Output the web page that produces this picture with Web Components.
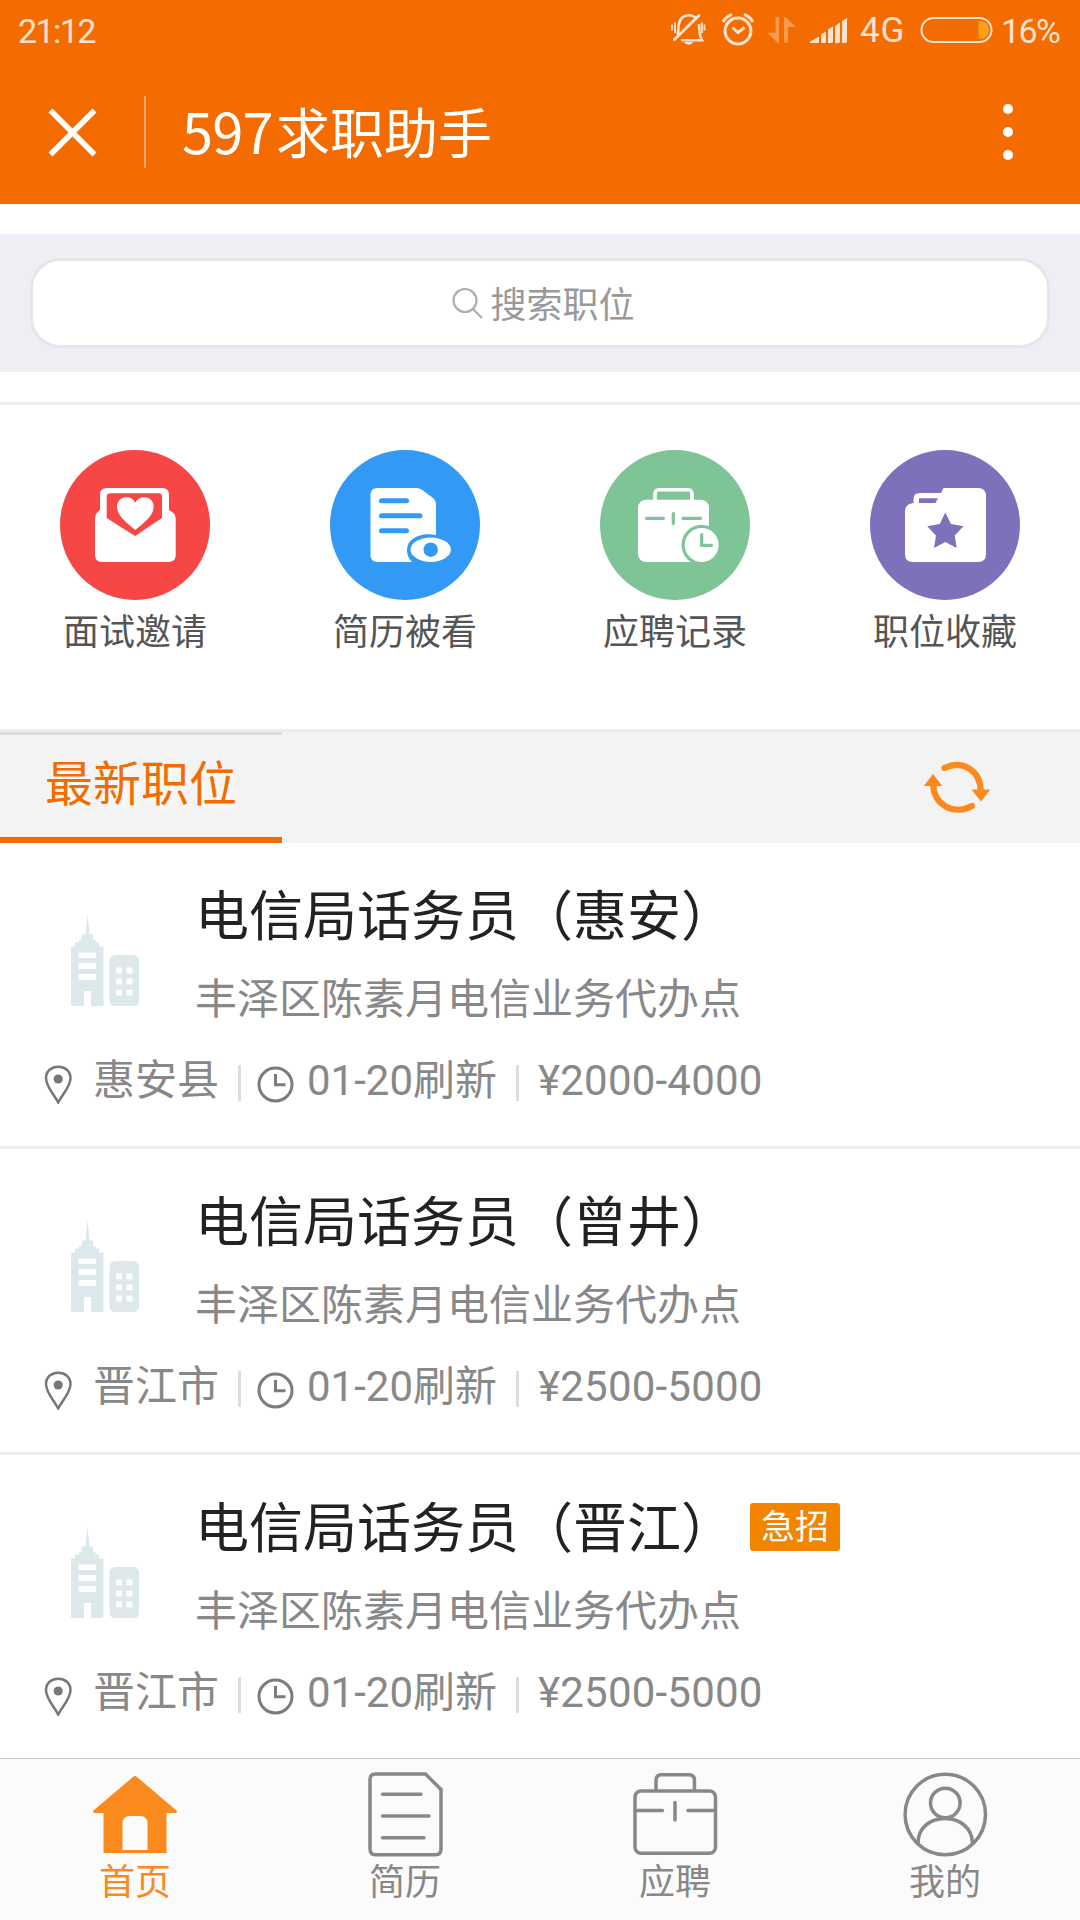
<!DOCTYPE html>
<html lang="zh-CN">
<head>
<meta charset="utf-8">
<title>597求职助手</title>
<style>
html,body{margin:0;padding:0;background:#fff}
body{width:1080px;height:1920px;overflow:hidden;font-family:Roboto,"Noto Sans CJK SC",sans-serif}
</style>
</head>
<body>
<app-screen></app-screen>
<script>
const define = (name, render) => customElements.define(name, class extends HTMLElement {
  connectedCallback() {
    if (this.shadowRoot) return;
    this.attachShadow({ mode: 'open' }).innerHTML =
      '<style>*{box-sizing:border-box}svg{display:block;flex:none}</style>' + render(this);
  }
});

define('status-bar', () => `
<style>
:host{display:flex;align-items:flex-start;height:60px;padding:0 19px 0 18px;color:#fde2cd;font-size:34px;line-height:62px;letter-spacing:-1.6px}
.time{margin-right:auto}
.alarm{margin-left:16px}.data{margin-left:14px}.sig{margin-left:14px}
.net{margin-left:12px;width:46px;font-size:35px;letter-spacing:.8px}.bat{margin-left:14px}
.pct{margin-left:8px;width:60px}
</style>
<span class="time">21:12</span>
<svg width="36" height="60" viewBox="670 0 36 60" fill="none" stroke="#fde2cd" stroke-width="2.6">
 <path d="M677.5 35C679 31 678 28 678.6 25C680 18 684 15.3 688.5 15.3C692 15.3 694.5 16.5 696.5 19M699 24C699.3 30 699 35 702 40.3H681"/>
 <path d="M674.5 39.5L699 15.5" stroke-width="3" stroke-linecap="round"/>
 <path d="M672 24.5V30.5M675 22.5V33M702 22.5V33M704.5 24.5V30.5" stroke-width="1.8"/>
 <path d="M683.5 42H693.5Q689 47.5 683.5 42Z" fill="#fde2cd" stroke="none"/>
</svg>
<svg class="alarm" width="32" height="60" viewBox="722 0 32 60" fill="none" stroke="#fde2cd" stroke-width="3">
 <circle cx="738" cy="31" r="12.9"/><path d="M732.5 27.5L738 32.5L744.5 27.5" stroke-width="3"/>
 <path d="M723 22Q726 16.500 732 14.500M753 22Q750 16.500 744 14.500" stroke-width="3.2"/>
</svg>
<svg class="data" width="28" height="60" viewBox="769 0 28 60" fill="#f89a50">
 <path d="M776.500 17.500Q778 16 780 17.500V43H778.500L769 33.500V32.800H776.500ZM785 17H786.500L796 26.300V27H789V42Q787 44 785 42Z"/>
</svg>
<svg class="sig" width="38" height="60" viewBox="811 0 38 60" fill="#fde2cd">
 <path d="M811 43V41.800L820 36.500V42L819 43ZM822 34.500L827 31.500V42L826 43H822ZM829 29.500L834 26.500V42L833 43H829ZM836 26L841 22.500V42L840 43H836ZM843 21L848 18V42L847 43H843Z"/>
</svg>
<span class="net">4G</span>
<svg class="bat" width="73" height="60" viewBox="920.500 0 73 60">
 <rect x="922" y="18" width="70" height="24" rx="12" fill="none" stroke="#fde2cd" stroke-width="2"/>
 <path d="M979 21Q989.500 21 989.500 30T979 39Z" fill="#ff9f1a"/>
</svg>
<span class="pct">16%</span>`);

define('title-bar', () => `
<style>
:host{display:flex;align-items:center;height:144px;color:#fff;padding-left:48px}
i{width:2px;height:72px;background:#f8a566;margin:0 36px 0 47px}
h1{margin:6px 0 0;font-size:54px;font-weight:400;line-height:72px;flex:1;display:flex;align-items:baseline}
::slotted([slot=num]){width:94px;font-family:"Noto Sans CJK SC",sans-serif;font-size:56px;line-height:64px;letter-spacing:-.8px}
.more{margin-right:65px}
</style>
<svg width="49" height="49" viewBox="0 0 49 49" stroke="#fff" stroke-width="5.600"><path d="M2.500 2.500L46.500 46.500M46.500 2.500L2.500 46.500"/></svg>
<i></i><h1><slot name="num"></slot><slot></slot></h1>
<svg class="more" width="14" height="60" viewBox="0 0 14 60" fill="#fff"><circle cx="7" cy="7" r="5"/><circle cx="7" cy="30" r="5"/><circle cx="7" cy="53" r="5"/></svg>`);

define('search-box', () => `
<style>
:host{display:block;margin:30px 0;padding:24px 30px;height:138px;background:#efeef4}
div{height:90px;border:3px solid #e5e5ea;border-radius:30px;background:#fff;display:flex;align-items:center;justify-content:center;color:#999;font-size:36px;line-height:60px;padding-left:4px}
svg{margin:0 7px 0 3px}
span{margin-top:5px}
</style>
<div><svg width="31" height="32" viewBox="0 0 31 32" fill="none" stroke="#adadad" stroke-width="2.200"><circle cx="13" cy="13.500" r="11.500"/><path d="M21 22L30 31"/></svg><span><slot></slot></span></div>`);

const quickIcons = {
  invite: `<circle cx="75" cy="75" r="75" fill="#f64646"/>
   <path fill="#fff" d="M40 60V45Q40 38 47 38H102Q109 38 109 45V60Q115.700 63 115.700 69V105Q115.700 112 108.700 112H42Q35 112 35 105V69Q35 63 40 60Z"/>
   <path d="M46.700 68V47Q46.700 43.300 50.500 43.300H98.500Q102 43.300 102 47V68L75 86Z" fill="#f64646"/>
   <path d="M75.300 80C69 74.500 57 66.500 57 56.500C57 46 71.500 44 75.300 52.700C79 44 93.700 46 93.700 56.500C93.700 66.500 81.500 74.500 75.300 80Z" fill="#fff"/>`,
  viewed: `<circle cx="75" cy="75" r="75" fill="#329af4"/>
   <path fill="#fff" d="M47.500 38H87Q90 38 93 40.500L103 48Q106 50.500 106 54V112H47.500Q40.500 112 40.500 105V45Q40.500 38 47.500 38Z"/>
   <path d="M51.500 50.700H76.500M51.500 65.700H90M51.500 80.700H76.500" stroke="#329af4" stroke-width="5" stroke-linecap="round"/>
   <path d="M77 100C77 90 87 84.200 99 84.200C104 84.200 107 85 110 87V114H84.500C79.500 110 77 106 77 100Z" fill="#329af4"/>
   <ellipse cx="100.700" cy="99.700" rx="20.200" ry="12.200" fill="#fff"/><circle cx="100.700" cy="99.700" r="7.200" fill="#329af4"/>`,
  record: `<circle cx="75" cy="75" r="75" fill="#7ec496"/>
   <rect x="38" y="49.700" width="71" height="62.300" rx="8" fill="#fff"/>
   <path d="M55 52V44Q55 39.800 59 39.800H88Q92 39.800 92 44V52" fill="none" stroke="#fff" stroke-width="3.600"/>
   <path d="M46.500 68.300H63.500M83 68.300H100.500M73.300 63.500V73.500" stroke="#7ec496" stroke-width="3.200" stroke-linecap="round"/>
   <circle cx="101.700" cy="95" r="20.200" fill="#7ec496"/><circle cx="101.700" cy="95" r="17" fill="#fff"/>
   <path d="M101.700 84.500V95.300H111.500" fill="none" stroke="#7ec496" stroke-width="3.200" stroke-linecap="round"/>`,
  saved: `<circle cx="75" cy="75" r="75" fill="#7c72bc"/>
   <path fill="#fff" d="M43.500 53V49Q43.500 43 49.500 43H71L73.500 38H108Q116 38 116 46V104Q116 112 108 112H43Q35 112 35 104V61Q35 54 43.500 53Z"/>
   <path d="M49 48.200H68L65.500 53H49Z" fill="#7c72bc"/>
   <path d="M75.300 62.500L81 74L93.500 76.200L84.700 85.500L86.700 98L75.300 92L64 98L66 85.500L57.200 76.200L69.700 74Z" fill="#7c72bc"/>`
};
define('quick-link', el => `
<style>:host{display:flex;flex:1;flex-direction:column;align-items:center;color:#555;font-size:36px;line-height:60px}span{margin-top:3px}</style>
<svg width="150" height="150" viewBox="0 0 150 150">${quickIcons[el.getAttribute('icon')]}</svg><span><slot></slot></span>`);

define('quick-links', () => `
<style>:host{display:flex;height:330px;border-top:3px solid #ededed;border-bottom:3px solid #ececec;padding-top:45px}</style><slot></slot>`);

define('section-tabs', () => `
<style>
:host{display:flex;justify-content:space-between;height:111px;background:#f3f3f3}
div{width:282px;border-top:3px solid #dcdcdc;border-bottom:6px solid #f46c00;padding-left:45px;color:#f46c00;font-size:48px;line-height:99px;text-shadow:3px 3px 6px #fff}
svg{margin:28px 89px 0 0}
</style>
<div><slot></slot></div>
<svg width="68" height="54" viewBox="923 760 68 54" fill="none" stroke="#fa8a1e" stroke-width="6.200" stroke-linecap="round">
 <path d="M944.500 768C962 759.500 981 770 980.800 792M972 806C955 815.500 933 806 933.200 783"/>
 <path d="M923.800 786L933 774L942.300 786ZM971.500 789.500H990.300L981 801.500Z" fill="#fa8a1e" stroke="none"/>
</svg>`);

define('job-card', el => {
  const a = n => el.getAttribute(n);
  return `
<style>
:host{display:block;height:306px;border-bottom:3px solid #ededed;padding-top:39px;background:#fff}
.head{display:flex}
.logo{margin:31px 55px 0 71px}
.title{display:flex;align-items:center;color:#222;font-size:54px;line-height:72px}
.badge{margin-left:15px;margin-top:-6px;width:90px;height:48px;background:#f28400;color:#fff;font-size:34px;line-height:49px;text-align:center;border-radius:3px}
.co{margin-top:16px;color:#888;font-size:42px;line-height:60px}
.meta{display:flex;align-items:center;margin-top:21px;padding-left:44px;color:#888;font-size:42px;line-height:60px;white-space:nowrap}
.pin{margin:6px 21px 0 0}.clock{margin:6px 13px 0 16px}
i{width:3px;height:36px;background:#ddd;margin:3px 0 0 19px}
.pay{margin-left:19px;letter-spacing:.2px}
</style>
<div class="head">
 <svg class="logo" width="69" height="94" viewBox="71 913 69 94">
  <path fill="#dde8ea" fill-rule="evenodd" d="M71 946.500H75V942.500H79V940H81.500V934.500H85.500L87.500 914L89.500 934.500H93V940H95.500V942.500H99V946.500H103.500V1004.500Q103.500 1006 102 1006H91V991H84V1006H72.500Q71 1006 71 1004.500ZM78.500 952.500V958H96V952.500ZM78.500 963V969H96V963ZM78.500 974V980H96V974Z"/>
  <path fill="#dde8ea" fill-rule="evenodd" d="M115 955H134Q139 956 139 961V1000Q139 1006 134 1006H115Q109.500 1006 109.500 1000V961Q109.500 956 115 955ZM116 967.500V973.500H122V967.500ZM126.500 967.500V973.500H132.500V967.500ZM116 978.500V984.500H122V978.500ZM126.500 978.500V984.500H132.500V978.500ZM116 989.500V995.500H122V989.500ZM126.500 989.500V995.500H132.500V989.500Z"/>
 </svg>
 <div><div class="title"><slot></slot>${el.hasAttribute('urgent') ? '<span class="badge">急招</span>' : ''}</div><div class="co">${a('company')}</div></div>
</div>
<div class="meta">
 <svg class="pin" width="28" height="39" viewBox="44 1065 28 39" fill="none" stroke="#777" stroke-width="2.500"><path d="M58.200 1102.500C54 1094 46 1087 46 1078C46 1071 51.500 1066.700 58.200 1066.700S70.500 1071 70.500 1078C70.500 1087 62.500 1094 58.200 1102.500Z"/><circle cx="58.200" cy="1079" r="4.600" fill="#777" stroke="none"/></svg>
 <span>${a('area')}</span><i></i>
 <svg class="clock" width="37" height="37" viewBox="0 0 37 37" fill="none" stroke="#7c7c7c" stroke-width="3"><circle cx="18.500" cy="18.500" r="16.500"/><path d="M18.500 8V18.700H28.500"/></svg>
 <span>${a('date')}刷新</span><i></i><span class="pay">${a('pay')}</span>
</div>`;
});

const navIcons = {
  home: `<path fill="#fa8a1e" fill-rule="evenodd" d="M135 1776Q136 1776 137 1777L176.500 1810.500Q177.500 1812.500 176 1813H166.500V1853H103.500V1813H94Q92.500 1812.500 93.500 1810.500L133 1777Q134 1776 135 1776ZM122.500 1850H147.500V1824Q147.500 1816 140 1816H130Q122.500 1816 122.500 1824Z"/>`,
  resume: `<path d="M375.500 1774H425.500L441 1789.500V1849Q441 1854.700 435.500 1854.700H375.500Q370 1854.700 370 1849V1779.500Q370 1774 375.500 1774Z"/><path d="M382.500 1794.300H421M382.500 1816H429M382.500 1837.800H424" stroke-linecap="round"/>`,
  apply: `<rect x="635" y="1791" width="80.500" height="62.300" rx="6"/><path d="M656 1790V1780.500Q656 1774.700 661.500 1774.700H689Q694.500 1774.700 694.500 1780.500V1790M635 1810.500H662.500M688 1810.500H715M675 1802.500V1820" stroke-linecap="round"/>`,
  me: `<circle cx="945.300" cy="1814.500" r="40.200"/><circle cx="945.300" cy="1803" r="14.800"/><path d="M918 1843C918 1828 930 1818.500 945 1818.500S972 1828 972.500 1843"/>`
};
define('nav-item', el => `
<style>:host{display:flex;flex:1;flex-direction:column;align-items:center;color:#888;font-size:36px;line-height:50px}:host([active]){color:#fa8a1e}svg{margin-top:11px}</style>
<svg width="90" height="88" viewBox="${el.getAttribute('x')} 1770 90 88" fill="none" stroke="#888" stroke-width="3.500">${navIcons[el.getAttribute('icon')].replace('<path fill=', '<path stroke="none" fill=')}</svg><span><slot></slot></span>`);

define('tab-bar', () => `<style>:host{display:flex;height:162px;background:#fbfbfb;border-top:1px solid #c4c4c4}</style><slot></slot>`);

define('app-screen', () => `
<style>
:host{display:flex;flex-direction:column;width:1080px;height:1920px;overflow:hidden}
header{background:#f46c00;height:204px;flex:none}
main{height:1554px;overflow:hidden;flex:none}
</style>
<header><status-bar></status-bar><title-bar><span slot="num">597</span><span>求职助手</span></title-bar></header>
<main>
<search-box>搜索职位</search-box>
<quick-links><quick-link icon="invite">面试邀请</quick-link><quick-link icon="viewed">简历被看</quick-link><quick-link icon="record">应聘记录</quick-link><quick-link icon="saved">职位收藏</quick-link></quick-links>
<section-tabs>最新职位</section-tabs>
<job-card company="丰泽区陈素月电信业务代办点" area="惠安县" date="01-20" pay="¥2000-4000">电信局话务员（惠安）</job-card>
<job-card company="丰泽区陈素月电信业务代办点" area="晋江市" date="01-20" pay="¥2500-5000">电信局话务员（曾井）</job-card>
<job-card urgent company="丰泽区陈素月电信业务代办点" area="晋江市" date="01-20" pay="¥2500-5000">电信局话务员（晋江）</job-card>
</main>
<tab-bar><nav-item active icon="home" x="90">首页</nav-item><nav-item icon="resume" x="360">简历</nav-item><nav-item icon="apply" x="630">应聘</nav-item><nav-item icon="me" x="900">我的</nav-item></tab-bar>`);
</script>
</body>
</html>
